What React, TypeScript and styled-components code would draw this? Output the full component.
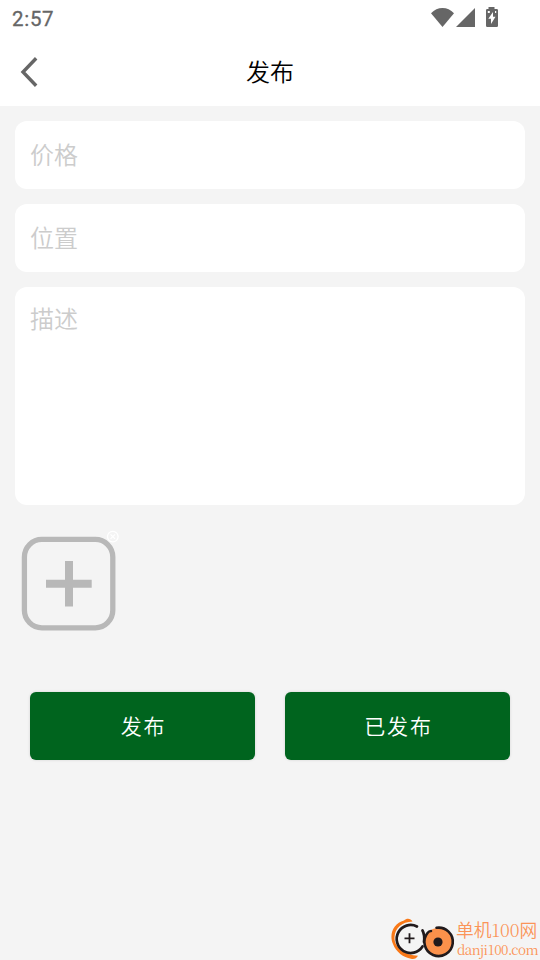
import React from "react";
import styled, { createGlobalStyle } from "styled-components";

const GlobalStyle = createGlobalStyle`
  * { box-sizing: border-box; }
  body {
    margin: 0;
    background: #f4f4f4;
    font-family: "Noto Sans CJK SC", sans-serif;
  }
`;

const Screen = styled.main`
  position: relative;
  display: flex;
  flex-direction: column;
  width: 540px;
  height: 960px;
  overflow: hidden;
  background: #f4f4f4;
`;

const StatusBar = styled.div`
  display: flex;
  justify-content: space-between;
  height: 36px;
  padding: 0 40px 0 12px;
  background: #fff;
`;

const Clock = styled.span`
  font: 400 20.5px/38px Roboto, sans-serif;
  letter-spacing: 0.7px;
  -webkit-text-stroke: 0.3px #666;
  color: #666;
`;

const Header = styled.header`
  display: grid;
  grid-template-columns: 60px 1fr 60px;
  align-items: center;
  height: 70px;
  background: #fff;
`;

const BackButton = styled.button`
  display: flex;
  padding: 2px 0 0 18px;
  border: 0;
  background: none;
`;

const Title = styled.h1`
  margin: 0;
  text-align: center;
  font-size: 24px;
  line-height: 36px;
  font-weight: 350;
  color: #000;
`;

const Form = styled.form`
  display: flex;
  flex-direction: column;
  gap: 15px;
  padding: 15px 15px 0;
`;

const Field = styled.input`
  display: block;
  width: 100%;
  height: 68px;
  padding: 0 15px 4px;
  border: 0;
  border-radius: 12px;
  outline: 0;
  background: #fff;
  font: 350 24px/36px "Noto Sans CJK SC", sans-serif;
  &::placeholder { color: #ccc; opacity: 1; }
`;

const Description = styled.textarea`
  display: block;
  width: 100%;
  height: 218px;
  padding: 13px 15px;
  border: 0;
  border-radius: 12px;
  outline: 0;
  resize: none;
  background: #fff;
  font: 350 24px/36px "Noto Sans CJK SC", sans-serif;
  &::placeholder { color: #ccc; opacity: 1; }
`;

const Upload = styled.div`
  display: flex;
  height: 110px;
  margin: 9px 0 0 4px;
`;

const Actions = styled.div`
  display: grid;
  grid-template-columns: 1fr 1fr;
  gap: 30px;
  padding: 0 15px;
  margin-top: 38px;
`;

const ActionButton = styled.button`
  height: 68px;
  padding: 0 0 2px 2px;
  border: 0;
  border-radius: 6px;
  background: #00641e;
  box-shadow: 0 0 3px rgba(0, 0, 0, 0.14);
  color: #fff;
  font: 350 21px/32px "Noto Sans CJK SC", sans-serif;
  letter-spacing: 1.8px;
`;

const Watermark = styled.div`
  position: absolute;
  right: 0;
  bottom: 0;
  display: flex;
  width: 150px;
  height: 44px;

  svg { flex: none; }
`;

const BrandText = styled.div`
  display: flex;
  flex-direction: column;
  color: #fb9458;
`;

const BrandName = styled.span`
  height: 24px;
  font: 350 17.8px/27px "Noto Sans CJK SC", sans-serif;
  white-space: nowrap;
`;

const BrandDigits = styled.span`
  font-family: "Noto Serif CJK SC", "Liberation Serif", serif;
`;

const BrandUrl = styled.span`
  height: 18px;
  padding-left: 1px;
  font: 13.5px/18px "Noto Serif CJK SC", "Liberation Serif", serif;
  letter-spacing: -0.6px;
  white-space: nowrap;
`;

const BackIcon = () => (
  <svg width="22" height="32" viewBox="0 0 22 32" fill="none">
    <path d="M17 3.500 5 16l12 12.500" stroke="#666" strokeWidth="3.400" strokeLinecap="square" />
  </svg>
);

const StatusIcons = () => (
  <svg width="70" height="34" viewBox="430 0 70 34" fill="#666">
    <path d="M442.500 27 431 13.200Q436 8 442.500 8T454 13.200Z" />
    <path d="M475 8v19h-19Z" />
    <path d="M488.500 9V7h6v2h2.200q1.300 0 1.300 1.300v15.400q0 1.300-1.300 1.300h-9.400q-1.300 0-1.300-1.300V10.300q0-1.300 1.300-1.300Z" />
    <path d="M493 12v4.800h2.500L491 24v-5.300h-2.700ZM487.800 11h2v2h-2ZM495 11h1.200v2H495Z" fill="#fff" />
  </svg>
);

const AddPhotoIcon = () => (
  <svg width="104" height="104" viewBox="19 529 104 104" fill="none">
    <rect x="24.400" y="539.400" width="88.400" height="88.400" rx="17.500" stroke="#b8b8b8" strokeWidth="5.300" />
    <path d="M69 561v45.500M46 583.800h45.700" stroke="#b8b8b8" strokeWidth="8" />
    <circle cx="112.800" cy="536.600" r="5.300" stroke="#fff" strokeWidth="1.300" />
    <path d="m110.500 534.300 4.600 4.600m0-4.600-4.600 4.600" stroke="#fff" strokeWidth="1.200" />
  </svg>
);

const BrandIcon = () => (
  <svg width="66" height="44" viewBox="390 916 66 44" fill="none">
    <path d="M412.500 921.500c-2-3.500-5.800-3.700-8.500-1C394 923 388.500 934 393 944c3 8 10.500 13.500 18 14.700 3 1 5.500-.5 7-3-13-.5-24-8-23.500-18.700C395 928 402 922 412.500 921.500Z" fill="#f97817" />
    <path d="M417 926.500A14 14 0 1 0 422.500 946.500" stroke="#211a1c" strokeWidth="2.700" strokeLinecap="round" />
    <path d="M404.500 938.300h10m-5-5v10" stroke="#211a1c" strokeWidth="1.800" />
    <path d="M422.500 930.500Q425 935 424 942" stroke="#211a1c" strokeWidth="2.700" strokeLinecap="round" />
    <circle cx="438.300" cy="942" r="14" fill="#fb914b" />
    <path d="M436.500 927.800A14.200 14.200 0 1 1 427.500 933Q429 931 431 931" stroke="#211a1c" strokeWidth="2.600" strokeLinecap="round" />
    <circle cx="438" cy="942" r="4.600" fill="#211a1c" />
  </svg>
);

export default function App() {
  return (
    <>
      <GlobalStyle />
      <Screen>
        <StatusBar>
          <Clock>2:57</Clock>
          <StatusIcons />
        </StatusBar>
        <Header>
          <BackButton aria-label="返回"><BackIcon /></BackButton>
          <Title>发布</Title>
        </Header>
        <Form>
          <Field placeholder="价格" />
          <Field placeholder="位置" />
          <Description placeholder="描述" />
          <Upload><AddPhotoIcon /></Upload>
          <Actions>
            <ActionButton type="button">发布</ActionButton>
            <ActionButton type="button">已发布</ActionButton>
          </Actions>
        </Form>
        <Watermark>
          <BrandIcon />
          <BrandText>
            <BrandName>单机<BrandDigits>100</BrandDigits>网</BrandName>
            <BrandUrl>danji100.com</BrandUrl>
          </BrandText>
        </Watermark>
      </Screen>
    </>
  );
}
